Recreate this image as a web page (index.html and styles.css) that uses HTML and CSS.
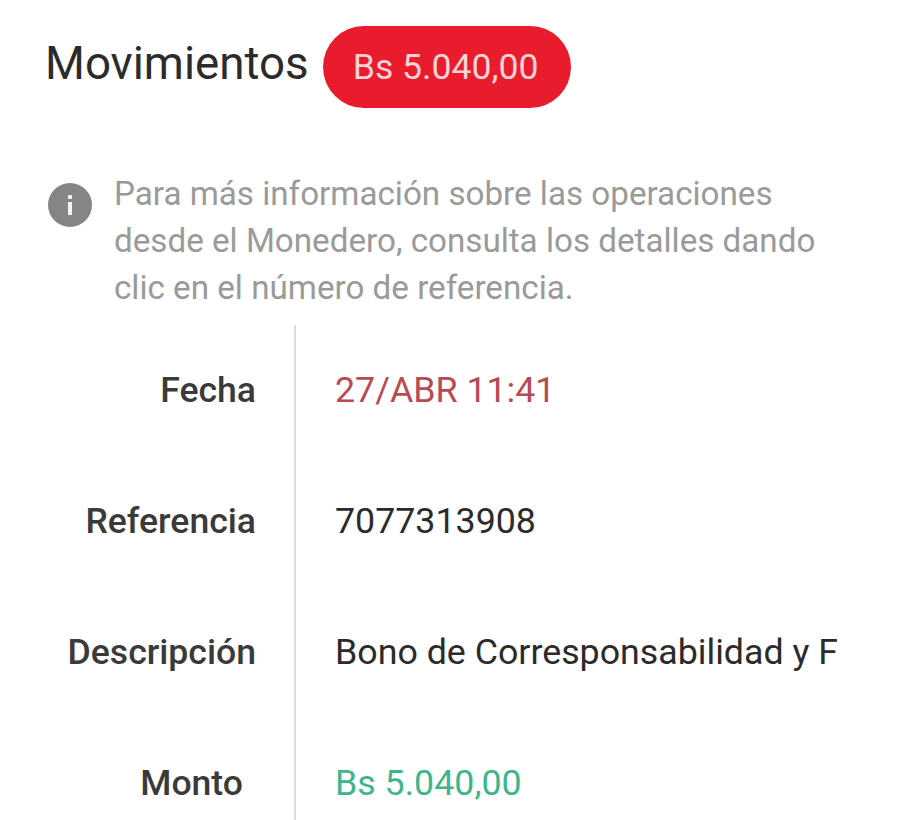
FILE: index.html
```html
<!DOCTYPE html>
<html lang="es">
<head>
<meta charset="utf-8">
<title>Movimientos</title>
<link rel="stylesheet" href="styles.css">
</head>
<body>
<main class="page">
  <header class="head">
    <h1 class="title">Movimientos</h1>
    <span class="pill">Bs 5.040,00</span>
  </header>
  <section class="notice">
    <svg class="info" viewBox="0 0 44 44" aria-hidden="true">
      <circle cx="22" cy="22" r="22" fill="#858585"/>
      <rect x="20" y="19" width="4" height="13" fill="#f4f4f4"/>
      <rect x="20" y="12" width="4" height="4" rx="1" fill="#f4f4f4"/>
    </svg>
    <p class="notice-text">Para más información sobre las operaciones<br>desde el Monedero, consulta los detalles dando<br>clic en el número de referencia.</p>
  </section>
  <dl class="details">
    <div class="row"><dt class="label">Fecha</dt><dd class="value date">27/ABR 11:41</dd></div>
    <div class="row"><dt class="label">Referencia</dt><dd class="value">7077313908</dd></div>
    <div class="row"><dt class="label">Descripción</dt><dd class="value">Bono de Corresponsabilidad y F</dd></div>
    <div class="row"><dt class="label label-short">Monto</dt><dd class="value amount">Bs 5.040,00</dd></div>
  </dl>
</main>
</body>
</html>
```
FILE: styles.css
```css
* { box-sizing: border-box; }
html, body { margin: 0; padding: 0; background: #fff; }
body { font-family: Roboto, "Liberation Sans", sans-serif; width: 900px; height: 820px; overflow: hidden; }
.page { padding: 26px 0 0 45px; }
.head { display: flex; align-items: center; gap: 14px; height: 82px; }
.title { margin: 0 0 6px; font-size: 45.7px; font-weight: 400; color: #2b2b2b; line-height: 1; }
.pill { display: flex; align-items: center; justify-content: center; width: 248px; height: 82px; padding-right: 2px; border-radius: 41px; background: #e91c2e; color: #fbd3d6; font-size: 35.6px; }
.notice { display: flex; gap: 22px; margin-top: 62px; }
.info { width: 44px; height: 44px; flex: none; margin: 13px 0 0 3px; }
.notice-text { margin: 0; font-size: 33.2px; line-height: 47px; color: #9a9a9a; }
.details { margin: 14px 0 0 -45px; }
.row { display: flex; height: 131px; }
.label { width: 294px; padding: 0 38px 0 0; text-align: right; font-size: 35.6px; font-weight: 500; color: #3a3a3a; line-height: 131px; }
.label-short { padding-right: 51px; }
.value { margin: 0; padding-left: 39px; border-left: 2px solid #dedede; font-size: 35.75px; color: #2b2b2b; line-height: 131px; flex: 1; }
.date { color: #b84a53; }
.amount { color: #3fb58d; }
```
